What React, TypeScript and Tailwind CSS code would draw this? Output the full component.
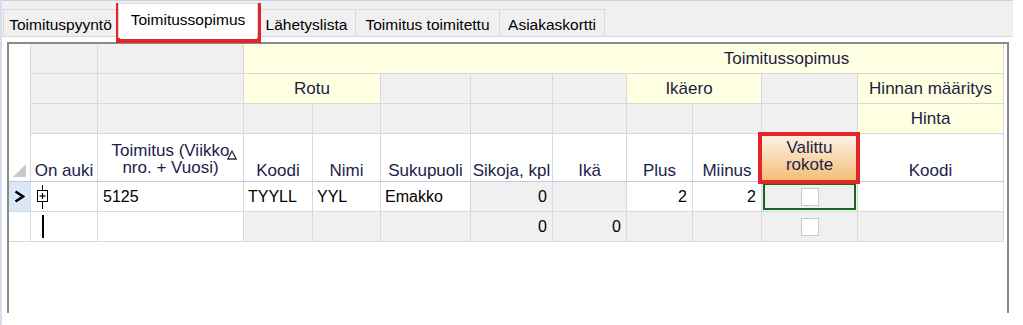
import React from "react";

const COLS =
  "grid grid-cols-[22px_67px_146px_69px_68px_90px_82px_74px_66px_69px_96px_146px] grid-rows-[30px_30px_30px_48px_30px_30px]";

const gray = "bg-[#f0f0f0] border-r border-b border-[#d9d9d9]";
const yellow = "bg-[#ffffe1] border-r border-b border-[#d9d9d9] flex items-center justify-center text-[17px] text-[#1d1d45] whitespace-nowrap";
const head = "bg-white border-r border-b border-r-[#c9d8ec] border-b-[#b7cbe3] flex flex-col items-center justify-end pb-[2px] text-[17px] text-[#1d1d4b] leading-[17px] text-center whitespace-nowrap";
const white = "bg-white border-r border-b border-[#d9d9d9] flex items-center";
const grayCell = "bg-[#f0f0f0] border-r border-b border-[#d9d9d9] flex items-center";

const tabs = [
  { label: "Toimituspyyntö", w: "w-[115px]" },
  { label: "Toimitussopimus", w: "w-[140px]", active: true },
  { label: "Lähetyslista", w: "w-[98px]" },
  { label: "Toimitus toimitettu", w: "w-[144px]" },
  { label: "Asiakaskortti", w: "w-[105px]" },
];

const Checkbox = () => <div className="h-[18px] w-[18px] border border-[#c9c9c9] bg-white" />;

const App: React.FC = () => {
  return (
    <div className="relative h-[325px] w-[1023px] overflow-hidden border-l-2 border-[#d3deee] bg-white font-['Liberation_Sans',Arial,sans-serif] text-[16px] text-black">
      {/* tab strip */}
      <div className="flex h-[37px] w-[1011px] items-end border-t border-b border-t-[#c7d3e5] border-b-[#d9d9d9] bg-[#f0f0f0] pl-[1px] text-[15.5px]">
        {tabs.map((t) =>
          t.active ? (
            <div
              key={t.label}
              className={`relative z-10 -mb-[2px] flex h-[35px] items-center justify-center border border-b-0 border-[#d9d9d9] bg-white pb-[3px] whitespace-nowrap ${t.w}`}
            >
              {t.label}
            </div>
          ) : (
            <div
              key={t.label}
              className={`flex h-[27px] items-center justify-center border border-b-0 border-l-0 border-[#d9d9d9] bg-[#f0f0f0] pt-[4px] whitespace-nowrap first:border-l ${t.w}`}
            >
              {t.label}
            </div>
          )
        )}
      </div>

      {/* grid */}
      <div className="pl-[5px] pt-[5px]">
        <div className="h-[271px] w-[1002px] border-2 border-b-0 border-[#8a8a8a] bg-white">
          <div className={COLS}>
            {/* group row 1 */}
            <div className="row-span-3 border-r border-[#d9d9d9] bg-white" />
            <div className={gray} />
            <div className={gray} />
            <div className={`col-span-9 ${yellow} pl-[326px]`}>Toimitussopimus</div>

            {/* group row 2 */}
            <div className={gray} />
            <div className={gray} />
            <div className={`col-span-2 ${yellow}`}>Rotu</div>
            <div className={gray} />
            <div className={gray} />
            <div className={gray} />
            <div className={`col-span-2 ${yellow} pr-[10px]`}>Ikäero</div>
            <div className={gray} />
            <div className={yellow}>Hinnan määritys</div>

            {/* group row 3 */}
            <div className={gray} />
            <div className={gray} />
            <div className={gray} />
            <div className={gray} />
            <div className={gray} />
            <div className={gray} />
            <div className={gray} />
            <div className={gray} />
            <div className={gray} />
            <div className={gray} />
            <div className={yellow}>Hinta</div>

            {/* column headers */}
            <div className="flex items-end justify-end border-r border-b border-r-[#c9d8ec] border-b-[#b7cbe3] bg-white pr-[4px] pb-[4px]">
              <svg width="13" height="13" viewBox="0 0 13 13">
                <polygon points="13,0 13,13 0,13" fill="#c9c9c9" />
              </svg>
            </div>
            <div className={head}>On auki</div>
            <div className={`${head} relative pb-[5px]`}>
              <span>Toimitus (Viikko</span>
              <span>nro. + Vuosi)</span>
              <svg className="absolute left-[129px] top-[16px]" width="10" height="10" viewBox="0 0 10 10">
                <polygon points="5,1 9.2,9 0.8,9" fill="none" stroke="#333" strokeWidth="1.3" />
              </svg>
            </div>
            <div className={head}>Koodi</div>
            <div className={head}>Nimi</div>
            <div className={head}>Sukupuoli</div>
            <div className={head}>Sikoja, kpl</div>
            <div className={head}>Ikä</div>
            <div className={head}>Plus</div>
            <div className={head}>Miinus</div>
            <div className="flex flex-col items-center justify-end border-r border-b border-r-[#c9d8ec] border-b-[#b7cbe3] bg-gradient-to-b from-[#fdf4e8] to-[#f3bd72] pb-[8px] text-center text-[17px] leading-[17px] text-[#1d1d4b]">
              <span>Valittu</span>
              <span>rokote</span>
            </div>
            <div className={head}>Koodi</div>

            {/* data row 1 */}
            <div className="flex items-center justify-center border-r border-b border-[#d9d9d9] bg-[#d9e7f6]">
              <svg width="11" height="13" viewBox="0 0 11 13">
                <polyline points="1.5,1.5 9,6.5 1.5,11.5" fill="none" stroke="#000" strokeWidth="2.6" />
              </svg>
            </div>
            <div className={`${white} pl-[5px]`}>
              <svg width="14" height="24" viewBox="0 0 14 24">
                <line x1="6.5" y1="0" x2="6.5" y2="24" stroke="#000" strokeWidth="1" />
                <rect x="1.5" y="5.5" width="10" height="11" fill="#fff" stroke="#000" strokeWidth="1" />
                <line x1="3.5" y1="11" x2="9.5" y2="11" stroke="#000" strokeWidth="1.2" />
                <line x1="6.5" y1="8" x2="6.5" y2="14" stroke="#000" strokeWidth="1.2" />
              </svg>
            </div>
            <div className={`${white} pl-[5px]`}>5125</div>
            <div className={`${white} pl-[4px]`}>TYYLL</div>
            <div className={`${white} pl-[4px]`}>YYL</div>
            <div className={`${white} pl-[4px]`}>Emakko</div>
            <div className={`${grayCell} justify-end pr-[5px]`}>0</div>
            <div className={grayCell} />
            <div className={`${white} justify-end pr-[5px]`}>2</div>
            <div className={`${white} justify-end pr-[5px]`}>2</div>
            <div className="border-r border-b border-[#d9d9d9] bg-[#f0f0f0] p-[1px]">
              <div className="flex h-full w-full items-center justify-center border-2 border-[#17661b]">
                <Checkbox />
              </div>
            </div>
            <div className={white} />

            {/* data row 2 */}
            <div className={white} />
            <div className={`${white} pl-[11px]`}>
              <div className="h-[23px] w-[2px] bg-black" />
            </div>
            <div className={white} />
            <div className={grayCell} />
            <div className={grayCell} />
            <div className={grayCell} />
            <div className={`${grayCell} justify-end pr-[5px]`}>0</div>
            <div className={`${grayCell} justify-end pr-[5px]`}>0</div>
            <div className={grayCell} />
            <div className={grayCell} />
            <div className={`${grayCell} justify-center`}>
              <Checkbox />
            </div>
            <div className={grayCell} />
          </div>
        </div>
      </div>

      {/* highlight boxes */}
      <div className="pointer-events-none absolute left-[114px] top-[3px] h-[40px] w-[145px] border-4 border-[#e5232b]" />
      <div className="pointer-events-none absolute left-[756px] top-[132px] h-[52px] w-[102px] border-4 border-[#e5232b]" />
    </div>
  );
};

export default App;
